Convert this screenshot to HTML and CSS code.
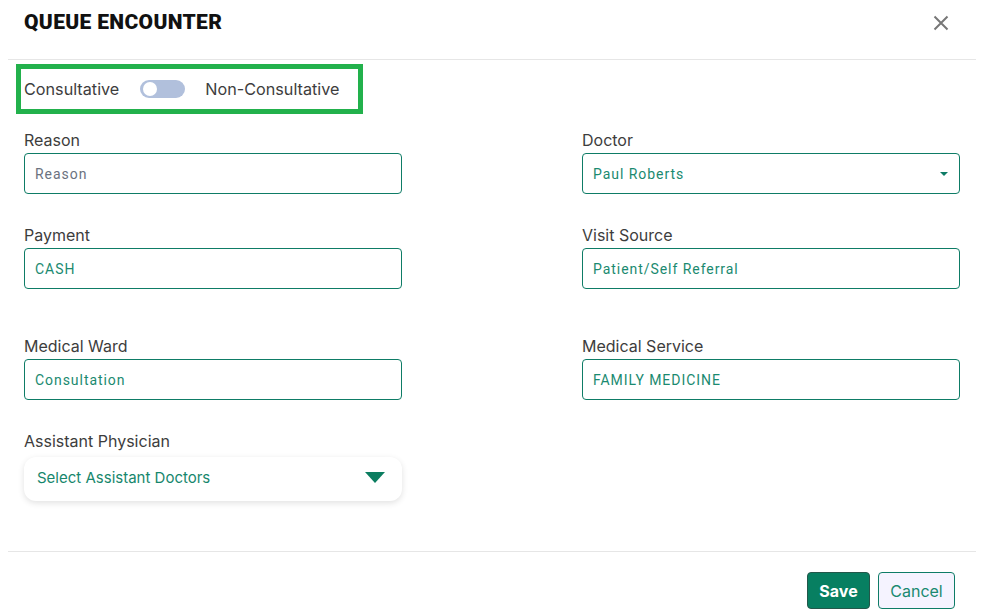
FILE: index.html
```html
<!DOCTYPE html>
<html lang="en">
<head>
    <meta charset="UTF-8">
    <meta name="viewport" content="width=device-width, initial-scale=1.0">
    <title>Queue Encounter</title>
    <link rel="stylesheet" href="styles.css">
</head>
<body>
    <div class="modal">
        <div class="modal-header">
            <h2>QUEUE ENCOUNTER</h2>
            <button class="close" aria-label="Close">
                <svg width="16" height="16" viewBox="0 0 16 16">
                    <path d="M1.5 1.5 L14.5 14.5 M14.5 1.5 L1.5 14.5" stroke="#777" stroke-width="2" fill="none"/>
                </svg>
            </button>
        </div>

        <div class="modal-body">
            <div class="type-switch">
                <span>Consultative</span>
                <span class="toggle"><span class="knob"></span></span>
                <span>Non-Consultative</span>
            </div>

            <div class="fields">
                <div class="field">
                    <label for="reason">Reason</label>
                    <input id="reason" class="input" type="text" placeholder="Reason">
                </div>
                <div class="field">
                    <label for="doctor">Doctor</label>
                    <div class="input select">
                        <span>Paul Roberts</span>
                        <span class="caret"></span>
                    </div>
                </div>

                <div class="field spaced">
                    <label>Payment</label>
                    <div class="input">CASH</div>
                </div>
                <div class="field spaced">
                    <label>Visit Source</label>
                    <div class="input">Patient/Self Referral</div>
                </div>

                <div class="field">
                    <label>Medical Ward</label>
                    <div class="input">Consultation</div>
                </div>
                <div class="field">
                    <label>Medical Service</label>
                    <div class="input">FAMILY MEDICINE</div>
                </div>

                <div class="field">
                    <label class="wide-gap">Assistant Physician</label>
                    <div class="multi-select">
                        <span>Select Assistant Doctors</span>
                        <svg width="20" height="11" viewBox="0 0 20 11">
                            <path d="M0 0 H20 L10 11 Z" fill="#0b7d60"/>
                        </svg>
                    </div>
                </div>
            </div>
        </div>

        <div class="modal-footer">
            <button class="btn btn-save">Save</button>
            <button class="btn btn-cancel">Cancel</button>
        </div>
    </div>
</body>
</html>
```

FILE: styles.css
```css
body {
    margin: 0;
    background-color: #ffffff;
    font-family: Inter, "Liberation Sans", sans-serif;
    color: #3d3d3d;
}

.modal {
    width: 983px;
    height: 616px;
    box-sizing: border-box;
    padding: 0 7px 0 8px;
}

.modal-header {
    display: flex;
    align-items: flex-start;
    justify-content: space-between;
    height: 60px;
    box-sizing: border-box;
    padding: 10px 16px 0 16px;
    border-bottom: 1px solid #e6e6e6;
}

.modal-header h2 {
    margin: 0;
    font-family: Roboto, "Liberation Sans", sans-serif;
    font-size: 21px;
    line-height: 24px;
    font-weight: 900;
    color: #111;
    letter-spacing: 0.35px;
}

.close {
    border: none;
    background: none;
    padding: 0;
    margin-top: 5px;
    margin-right: 11px;
    cursor: pointer;
}

.modal-body {
    padding: 4px 16px 0 16px;
}

.type-switch {
    display: inline-flex;
    align-items: center;
    gap: 20px;
    height: 40px;
    padding: 0 19px 0 3px;
    margin-left: -8px;
    border: 5px solid #22b14c;
    font-size: 16.2px;
    color: #3d3d3d;
}

.toggle {
    position: relative;
    width: 45px;
    height: 18px;
    border-radius: 9px;
    background-color: #b1c0dc;
    margin-left: 1px;
}

.knob {
    position: absolute;
    left: 3px;
    top: 2px;
    width: 14px;
    height: 14px;
    border-radius: 50%;
    background-color: #fff;
}

.fields {
    display: grid;
    grid-template-columns: 1fr 1fr;
    column-gap: 180px;
    row-gap: 31px;
    margin-top: 16px;
}

.field {
    display: flex;
    flex-direction: column;
}

.field.spaced {
    margin-bottom: 16px;
}

.field label {
    font-size: 16px;
    line-height: 20px;
    color: #3d3d3d;
    margin-bottom: 3px;
}

.field label.wide-gap {
    margin-bottom: 6px;
}

.input {
    height: 41px;
    box-sizing: border-box;
    border: 1px solid #0e7c66;
    border-radius: 4px;
    padding: 0 10px;
    display: flex;
    align-items: center;
    font-family: Roboto, "Liberation Sans", sans-serif;
    font-size: 14px;
    letter-spacing: 0.95px;
    color: #1a8a70;
    background: #fff;
    outline: none;
}

input.input {
    width: 100%;
}

input.input::placeholder {
    color: #6b7280;
}

.select {
    justify-content: space-between;
}

.caret {
    width: 0;
    height: 0;
    border-left: 4px solid transparent;
    border-right: 4px solid transparent;
    border-top: 4px solid #0e7c66;
    margin-right: 1px;
}

.multi-select {
    height: 44px;
    box-sizing: border-box;
    display: flex;
    align-items: center;
    justify-content: space-between;
    padding: 0 17px 3px 13px;
    border-radius: 12px;
    background: #fff;
    box-shadow: 0 2px 6px rgba(0, 0, 0, 0.12);
    font-size: 15px;
    color: #17876d;
}

.modal-footer {
    margin-top: 50px;
    border-top: 1px solid #e6e6e6;
    padding: 20px 21px 0 0;
    display: flex;
    justify-content: flex-end;
    gap: 8px;
}

.btn {
    height: 37px;
    box-sizing: border-box;
    border-radius: 4px;
    font-family: Inter, "Liberation Sans", sans-serif;
    font-size: 16px;
    cursor: pointer;
}

.btn-save {
    width: 63px;
    background-color: #077f61;
    border: 1px solid #23574a;
    color: #fff;
    font-weight: 700;
}

.btn-cancel {
    width: 77px;
    background-color: #f5f3ff;
    border: 1px solid #0e7c66;
    color: #1a8a70;
}
```
